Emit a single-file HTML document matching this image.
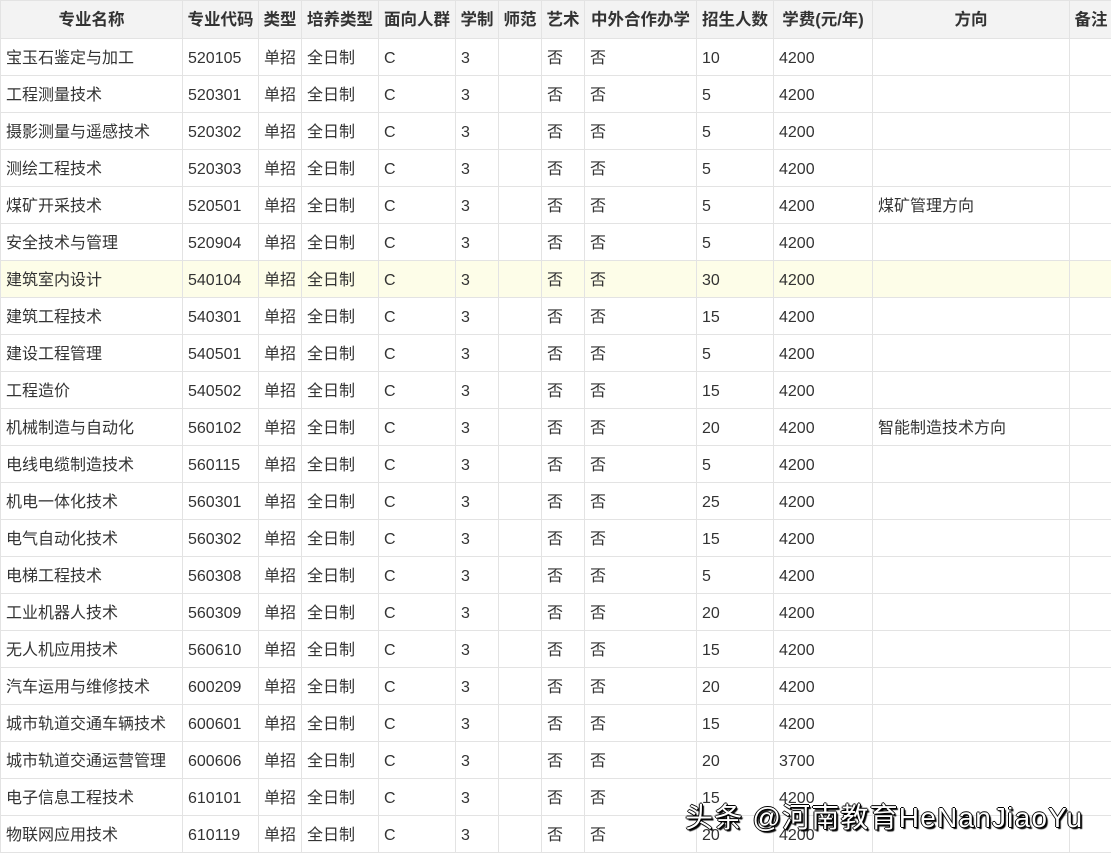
<!DOCTYPE html>
<html><head><meta charset="utf-8"><style>
body{margin:0;width:1111px;height:853px;overflow:hidden;background:#fff;font-family:"Liberation Sans","Noto Sans CJK SC",sans-serif;position:relative}
table{border-collapse:collapse;table-layout:fixed;width:1112px;position:absolute;left:0;top:0}
tr{height:37px}
tr.h{height:38px}
td,th{border:1px solid #e3e3e3;padding:0 0 0 5px;font-size:16px;line-height:20px;color:#333;white-space:nowrap;overflow:hidden}
td{vertical-align:baseline;padding-top:10px}
th{background:#f3f3f3;font-weight:bold;text-align:center;padding:0;font-size:16.5px;vertical-align:middle}
tr.hl td{background:#fdfde8}
.wm{position:absolute;left:685px;top:796px;font-size:28px;letter-spacing:1.2px;color:#fff;text-shadow:1px 1px 0 #000,-1px 0 0 #000,0 -1px 0 #000,1px 0 0 #000,0 1px 0 #000,2px 2px 1px #000;font-family:"Liberation Sans","Noto Sans CJK SC",sans-serif;white-space:nowrap}
</style></head><body>
<table>
<colgroup><col style="width:182px"><col style="width:76px"><col style="width:43px"><col style="width:77px"><col style="width:77px"><col style="width:43px"><col style="width:43px"><col style="width:43px"><col style="width:112px"><col style="width:77px"><col style="width:99px"><col style="width:197px"><col style="width:43px"></colgroup>
<tr class="h"><th>专业名称</th><th>专业代码</th><th>类型</th><th>培养类型</th><th>面向人群</th><th>学制</th><th>师范</th><th>艺术</th><th>中外合作办学</th><th>招生人数</th><th>学费(元/年)</th><th>方向</th><th>备注</th></tr>
<tr><td>宝玉石鉴定与加工</td><td>520105</td><td>单招</td><td>全日制</td><td>C</td><td>3</td><td></td><td>否</td><td>否</td><td>10</td><td>4200</td><td></td><td></td></tr>
<tr><td>工程测量技术</td><td>520301</td><td>单招</td><td>全日制</td><td>C</td><td>3</td><td></td><td>否</td><td>否</td><td>5</td><td>4200</td><td></td><td></td></tr>
<tr><td>摄影测量与遥感技术</td><td>520302</td><td>单招</td><td>全日制</td><td>C</td><td>3</td><td></td><td>否</td><td>否</td><td>5</td><td>4200</td><td></td><td></td></tr>
<tr><td>测绘工程技术</td><td>520303</td><td>单招</td><td>全日制</td><td>C</td><td>3</td><td></td><td>否</td><td>否</td><td>5</td><td>4200</td><td></td><td></td></tr>
<tr><td>煤矿开采技术</td><td>520501</td><td>单招</td><td>全日制</td><td>C</td><td>3</td><td></td><td>否</td><td>否</td><td>5</td><td>4200</td><td>煤矿管理方向</td><td></td></tr>
<tr><td>安全技术与管理</td><td>520904</td><td>单招</td><td>全日制</td><td>C</td><td>3</td><td></td><td>否</td><td>否</td><td>5</td><td>4200</td><td></td><td></td></tr>
<tr class="hl"><td>建筑室内设计</td><td>540104</td><td>单招</td><td>全日制</td><td>C</td><td>3</td><td></td><td>否</td><td>否</td><td>30</td><td>4200</td><td></td><td></td></tr>
<tr><td>建筑工程技术</td><td>540301</td><td>单招</td><td>全日制</td><td>C</td><td>3</td><td></td><td>否</td><td>否</td><td>15</td><td>4200</td><td></td><td></td></tr>
<tr><td>建设工程管理</td><td>540501</td><td>单招</td><td>全日制</td><td>C</td><td>3</td><td></td><td>否</td><td>否</td><td>5</td><td>4200</td><td></td><td></td></tr>
<tr><td>工程造价</td><td>540502</td><td>单招</td><td>全日制</td><td>C</td><td>3</td><td></td><td>否</td><td>否</td><td>15</td><td>4200</td><td></td><td></td></tr>
<tr><td>机械制造与自动化</td><td>560102</td><td>单招</td><td>全日制</td><td>C</td><td>3</td><td></td><td>否</td><td>否</td><td>20</td><td>4200</td><td>智能制造技术方向</td><td></td></tr>
<tr><td>电线电缆制造技术</td><td>560115</td><td>单招</td><td>全日制</td><td>C</td><td>3</td><td></td><td>否</td><td>否</td><td>5</td><td>4200</td><td></td><td></td></tr>
<tr><td>机电一体化技术</td><td>560301</td><td>单招</td><td>全日制</td><td>C</td><td>3</td><td></td><td>否</td><td>否</td><td>25</td><td>4200</td><td></td><td></td></tr>
<tr><td>电气自动化技术</td><td>560302</td><td>单招</td><td>全日制</td><td>C</td><td>3</td><td></td><td>否</td><td>否</td><td>15</td><td>4200</td><td></td><td></td></tr>
<tr><td>电梯工程技术</td><td>560308</td><td>单招</td><td>全日制</td><td>C</td><td>3</td><td></td><td>否</td><td>否</td><td>5</td><td>4200</td><td></td><td></td></tr>
<tr><td>工业机器人技术</td><td>560309</td><td>单招</td><td>全日制</td><td>C</td><td>3</td><td></td><td>否</td><td>否</td><td>20</td><td>4200</td><td></td><td></td></tr>
<tr><td>无人机应用技术</td><td>560610</td><td>单招</td><td>全日制</td><td>C</td><td>3</td><td></td><td>否</td><td>否</td><td>15</td><td>4200</td><td></td><td></td></tr>
<tr><td>汽车运用与维修技术</td><td>600209</td><td>单招</td><td>全日制</td><td>C</td><td>3</td><td></td><td>否</td><td>否</td><td>20</td><td>4200</td><td></td><td></td></tr>
<tr><td>城市轨道交通车辆技术</td><td>600601</td><td>单招</td><td>全日制</td><td>C</td><td>3</td><td></td><td>否</td><td>否</td><td>15</td><td>4200</td><td></td><td></td></tr>
<tr><td>城市轨道交通运营管理</td><td>600606</td><td>单招</td><td>全日制</td><td>C</td><td>3</td><td></td><td>否</td><td>否</td><td>20</td><td>3700</td><td></td><td></td></tr>
<tr><td>电子信息工程技术</td><td>610101</td><td>单招</td><td>全日制</td><td>C</td><td>3</td><td></td><td>否</td><td>否</td><td>15</td><td>4200</td><td></td><td></td></tr>
<tr><td>物联网应用技术</td><td>610119</td><td>单招</td><td>全日制</td><td>C</td><td>3</td><td></td><td>否</td><td>否</td><td>20</td><td>4200</td><td></td><td></td></tr>
</table>
<div class="wm">头条 @河南教育HeNanJiaoYu</div>
</body></html>
